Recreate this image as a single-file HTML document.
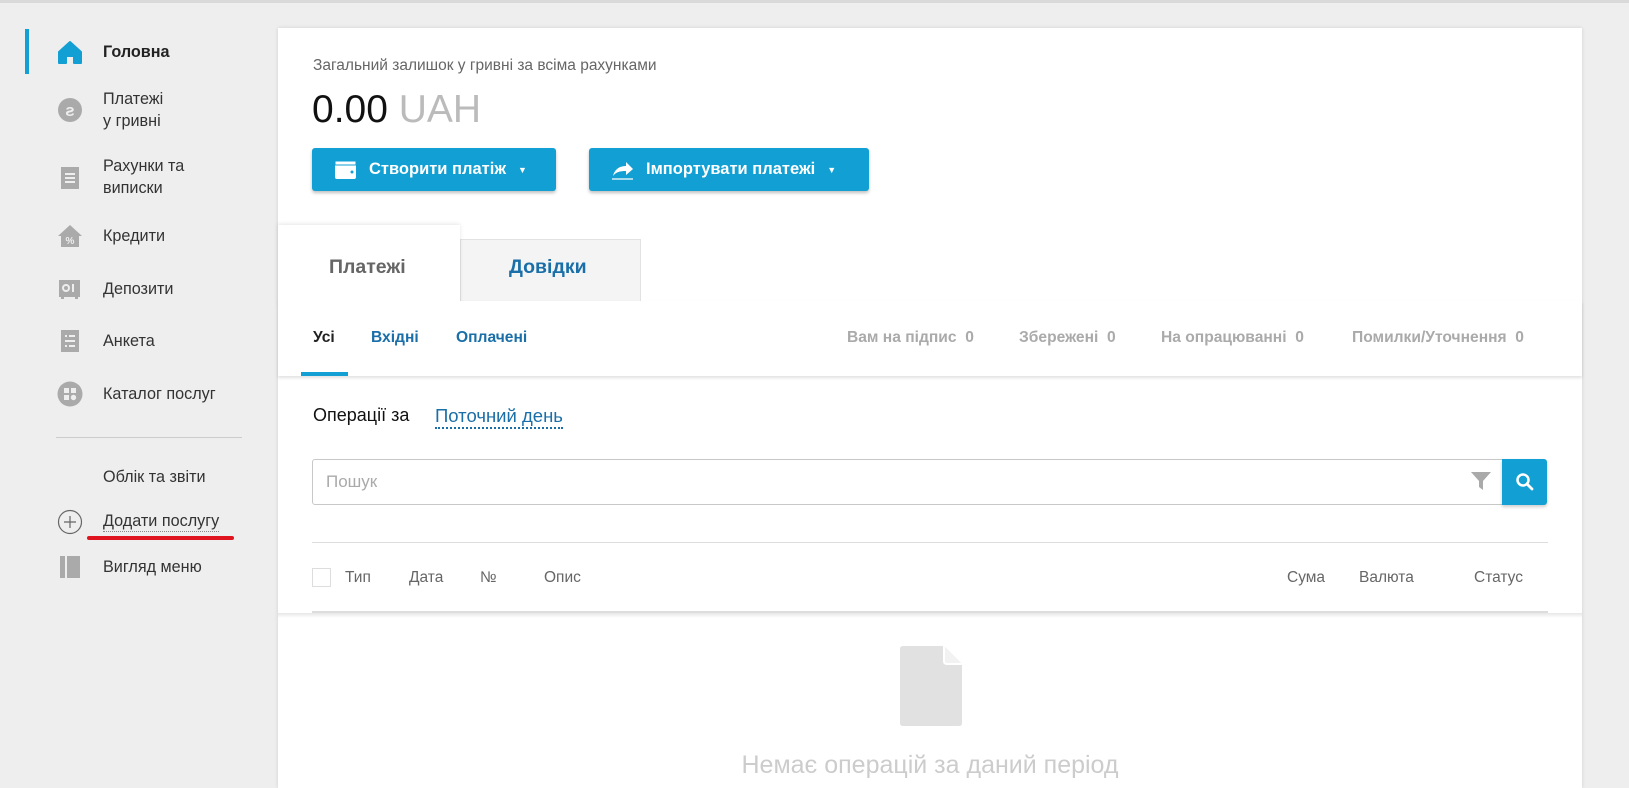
<!DOCTYPE html>
<html><head><meta charset="utf-8"><style>
*{box-sizing:border-box;margin:0;padding:0}
body{width:1629px;height:765px;overflow:hidden;background:#eeeeee;font-family:"Liberation Sans","DejaVu Sans",sans-serif;position:relative;color:#333}
.abs{position:absolute}
.topline{left:0;top:0;width:1629px;height:3px;background:#d9d9d9}
.side{font-size:16.2px;color:#333;line-height:22px}
.ico{position:absolute;left:57px;width:26px;height:26px}
.card{left:278px;top:28px;width:1304px;height:760px;background:#fff;box-shadow:0 0 4px rgba(0,0,0,.12)}
.btn{background:#129fd3;color:#fff;font-weight:bold;font-size:16.5px;border-radius:3px;box-shadow:0 2px 3px rgba(0,0,0,.25);display:flex;align-items:center}
.sub{font-weight:bold;font-size:15.6px}
.gray{color:#aaa}
.th{font-size:15.5px;color:#666;top:569px}
</style></head><body>
<div class="abs topline"></div>

<div class="abs" style="left:25px;top:29px;width:4px;height:45px;background:#129fd3"></div>
<svg class="ico" style="top:39px" viewBox="0 0 26 26"><path d="M13 3 L24 13 V24 H17 V17 H9 V24 H2 V13 Z" fill="#129fd3" stroke="#129fd3" stroke-linejoin="round" stroke-width="2"/></svg>
<div class="abs side" style="left:103px;top:41px;font-weight:bold;color:#222">Головна</div>

<svg class="ico" style="top:97px" viewBox="0 0 26 26"><circle cx="13" cy="13" r="12" fill="#aaa"/><text x="13" y="19" text-anchor="middle" font-size="17" font-weight="bold" fill="#eee" font-family="Liberation Sans">ƨ</text></svg>
<div class="abs side" style="left:103px;top:88px">Платежі<br>у гривні</div>

<svg class="ico" style="top:165px" viewBox="0 0 26 26"><rect x="4" y="2" width="18" height="22" fill="#aaa"/><path d="M8 9h10M8 13h10M8 17h10" stroke="#eee" stroke-width="2"/></svg>
<div class="abs side" style="left:103px;top:155px">Рахунки та<br>виписки</div>

<svg class="ico" style="top:223px" viewBox="0 0 26 26"><path d="M13 2 L25 13 H22 V24 H4 V13 H1 Z" fill="#aaa"/><text x="13" y="21" text-anchor="middle" font-size="10" font-weight="bold" fill="#eee" font-family="Liberation Sans">%</text></svg>
<div class="abs side" style="left:103px;top:225px">Кредити</div>

<svg class="ico" style="top:276px" viewBox="0 0 26 26"><rect x="2" y="4" width="21" height="17" fill="#aaa"/><rect x="4" y="21" width="3" height="2" fill="#aaa"/><rect x="18" y="21" width="3" height="2" fill="#aaa"/><circle cx="9" cy="12" r="3" fill="none" stroke="#eee" stroke-width="2"/><path d="M16 8v8" stroke="#eee" stroke-width="2"/></svg>
<div class="abs side" style="left:103px;top:278px">Депозити</div>

<svg class="ico" style="top:328px" viewBox="0 0 26 26"><rect x="4" y="2" width="18" height="22" fill="#aaa"/><path d="M8 8h2M12 8h6M8 13h10M8 18h2M12 18h6" stroke="#eee" stroke-width="2"/></svg>
<div class="abs side" style="left:103px;top:330px">Анкета</div>

<svg class="ico" style="top:381px" viewBox="0 0 26 26"><circle cx="13" cy="13" r="12.5" fill="#aaa"/><rect x="7" y="7" width="5" height="5" fill="#eee"/><rect x="14" y="7" width="5" height="5" fill="#eee"/><rect x="7" y="14" width="5" height="5" fill="#eee"/><circle cx="16.5" cy="16.5" r="2.7" fill="#eee"/></svg>
<div class="abs side" style="left:103px;top:383px">Каталог послуг</div>

<div class="abs" style="left:56px;top:437px;width:186px;height:1px;background:#ccc"></div>
<div class="abs side" style="left:103px;top:466px">Облік та звіти</div>
<svg class="ico" style="top:509px" viewBox="0 0 26 26"><circle cx="13" cy="13" r="11.5" fill="none" stroke="#666" stroke-width="1.2"/><path d="M13 7v12M7 13h12" stroke="#666" stroke-width="1.2"/></svg>
<div class="abs side" style="left:103px;top:511px;border-bottom:1px dotted #888;line-height:20px">Додати послугу</div>
<div class="abs" style="left:87px;top:536px;width:147px;height:4px;border-radius:2px;background:#e0141e"></div>
<svg class="ico" style="top:554px" viewBox="0 0 26 26"><rect x="3" y="2" width="5" height="22" fill="#aaa"/><rect x="10" y="2" width="13" height="22" fill="#aaa"/></svg>
<div class="abs side" style="left:103px;top:556px">Вигляд меню</div>

<div class="abs card"></div>
<div class="abs" style="left:313px;top:57px;font-size:15.5px;color:#666">Загальний залишок у гривні за всіма рахунками</div>
<div class="abs" style="left:312px;top:88px;font-size:39px;color:#111">0.00 <span style="color:#bbb">UAH</span></div>

<div class="abs btn" style="left:312px;top:148px;width:244px;height:43px">
 <svg style="margin-left:22px" width="24" height="20" viewBox="0 0 24 20"><rect x="1" y="1" width="21" height="18" rx="2" fill="#fff"/><rect x="1" y="1" width="21" height="4" fill="#fff" stroke="#129fd3" stroke-width="1"/><circle cx="18" cy="12" r="1.5" fill="#129fd3"/></svg>
 <span style="margin-left:11px">Створити платіж</span><span style="margin-left:12px;font-size:9px">▼</span></div>
<div class="abs btn" style="left:589px;top:148px;width:280px;height:43px">
 <svg style="margin-left:22px" width="24" height="22" viewBox="0 0 24 22"><path d="M2 17 C4 9 10 7 15 7 V3 L22 10 L15 16 V12 C9 12 5 13 2 17Z" fill="#fff"/><path d="M1 20h21" stroke="#fff" stroke-width="1.2"/></svg>
 <span style="margin-left:11px">Імпортувати платежі</span><span style="margin-left:12px;font-size:9px">▼</span></div>

<div class="abs" style="left:460px;top:239px;width:181px;height:62px;background:#f4f4f4;border:1px solid #e2e2e2;border-bottom:none"></div>
<div class="abs" style="left:278px;top:225px;width:182px;height:80px;background:#fff;box-shadow:0 -1px 4px rgba(0,0,0,.1)"></div>
<div class="abs" style="left:329px;top:256px;font-size:19.5px;font-weight:bold;color:#666">Платежі</div>
<div class="abs" style="left:509px;top:256px;font-size:19.5px;font-weight:bold;color:#1a6fa8">Довідки</div>

<div class="abs" style="left:278px;top:301px;width:1304px;height:75px;background:#fff;box-shadow:0 2px 3px rgba(0,0,0,.12)"></div>
<div class="abs" style="left:278px;top:298px;width:182px;height:8px;background:#fff"></div>
<div class="abs sub" style="left:313px;top:329px;color:#222">Усі</div>
<div class="abs" style="left:301px;top:372px;width:47px;height:4px;background:#129fd3"></div>
<div class="abs sub" style="left:371px;top:329px;color:#1a6fa8">Вхідні</div>
<div class="abs sub" style="left:456px;top:329px;color:#1a6fa8">Оплачені</div>
<div class="abs sub gray" style="left:847px;top:329px">Вам на підпис&nbsp;&nbsp;0</div>
<div class="abs sub gray" style="left:1019px;top:329px">Збережені&nbsp;&nbsp;0</div>
<div class="abs sub gray" style="left:1161px;top:329px">На опрацюванні&nbsp;&nbsp;0</div>
<div class="abs sub gray" style="left:1352px;top:329px">Помилки/Уточнення&nbsp;&nbsp;0</div>

<div class="abs" style="left:313px;top:405px;font-size:18px;color:#111">Операції за</div>
<div class="abs" style="left:435px;top:405px;font-size:18.5px;color:#1a6fa8;border-bottom:2px dotted #1a6fa8;line-height:22px">Поточний день</div>

<div class="abs" style="left:312px;top:459px;width:1191px;height:46px;border:1px solid #c8c8c8;border-radius:3px 0 0 3px"></div>
<div class="abs" style="left:326px;top:472px;font-size:17px;color:#aaa">Пошук</div>
<svg class="abs" style="left:1470px;top:470px" width="22" height="22" viewBox="0 0 22 22"><path d="M1 2H21L13 11V20L9 17V11Z" fill="#aaa"/></svg>
<div class="abs" style="left:1502px;top:459px;width:45px;height:46px;background:#129fd3;border-radius:0 3px 3px 0;box-shadow:0 2px 3px rgba(0,0,0,.2)"></div>
<svg class="abs" style="left:1515px;top:472px" width="20" height="20" viewBox="0 0 20 20"><circle cx="8" cy="8" r="5.5" fill="none" stroke="#fff" stroke-width="2.5"/><path d="M12 12L17 17" stroke="#fff" stroke-width="2.8" stroke-linecap="round"/></svg>

<div class="abs" style="left:312px;top:542px;width:1236px;height:1px;background:#ddd"></div>
<div class="abs" style="left:312px;top:568px;width:19px;height:19px;border:1px solid #ddd"></div>
<div class="abs th" style="left:345px">Тип</div>
<div class="abs th" style="left:409px">Дата</div>
<div class="abs th" style="left:480px">№</div>
<div class="abs th" style="left:544px">Опис</div>
<div class="abs th" style="left:1287px">Сума</div>
<div class="abs th" style="left:1359px">Валюта</div>
<div class="abs th" style="left:1474px">Статус</div>
<div class="abs" style="left:312px;top:611px;width:1236px;height:2px;background:#ddd"></div>
<div class="abs" style="left:278px;top:613px;width:1304px;height:5px;background:linear-gradient(#e6e6e6,#fff)"></div>

<svg class="abs" style="left:900px;top:646px" width="62" height="80" viewBox="0 0 62 80"><path d="M3 0H44L62 18V77Q62 80 59 80H3Q0 80 0 77V3Q0 0 3 0Z" fill="#e1e1e1"/><path d="M44 0L62 18H47Q44 18 44 15Z" fill="#f2f2f2"/><path d="M44 0V15Q44 18 47 18H62" fill="none" stroke="#fff" stroke-width="2"/></svg>
<div class="abs" style="left:720px;top:751px;width:420px;text-align:center;font-size:25px;color:#ccc">Немає операцій за даний період</div>
</body></html>
